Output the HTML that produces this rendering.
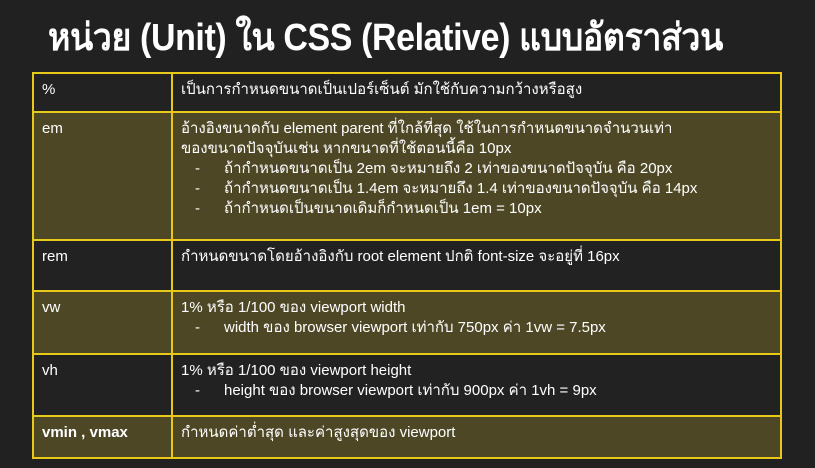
<!DOCTYPE html>
<html><head><meta charset="utf-8"><style>
body{margin:0;width:815px;height:468px;background:#212121;overflow:hidden;font-family:"Liberation Sans","DejaVu Sans",sans-serif;color:#fff}
h1{position:absolute;left:48px;top:8px;margin:0;font-size:35px;font-weight:bold;letter-spacing:-0.4px;white-space:nowrap;transform:scale(0.97,1.08);transform-origin:top left}
table{position:absolute;left:32px;top:72px;width:750px;border-collapse:collapse;font-size:15px}
td{border:2px solid #e8c918;vertical-align:top;padding:6px 8px 0 8px;line-height:20px;white-space:nowrap;overflow:hidden}
td:first-child{width:121px}
.o{background:#4d4726}
.d{background:#222}
.b{position:relative;padding-left:43px}
.b:before{content:"-";position:absolute;left:14px}
</style></head><body>
<h1>หน่วย (Unit) ใน CSS (Relative) แบบอัตราส่วน</h1>
<table>
<tr class="d" style="height:39px"><td>%</td><td>เป็นการกำหนดขนาดเป็นเปอร์เซ็นต์ มักใช้กับความกว้างหรือสูง</td></tr>
<tr class="o" style="height:128px"><td>em</td><td>อ้างอิงขนาดกับ element parent ที่ใกล้ที่สุด ใช้ในการกำหนดขนาดจำนวนเท่า<br>ของขนาดปัจจุบันเช่น หากขนาดที่ใช้ตอนนี้คือ 10px
<div class="b">ถ้ากำหนดขนาดเป็น 2em จะหมายถึง 2 เท่าของขนาดปัจจุบัน คือ 20px</div>
<div class="b">ถ้ากำหนดขนาดเป็น 1.4em จะหมายถึง 1.4 เท่าของขนาดปัจจุบัน คือ 14px</div>
<div class="b">ถ้ากำหนดเป็นขนาดเดิมก็กำหนดเป็น 1em = 10px</div></td></tr>
<tr class="d" style="height:51px"><td>rem</td><td>กำหนดขนาดโดยอ้างอิงกับ root element ปกติ font-size จะอยู่ที่ 16px</td></tr>
<tr class="o" style="height:63px"><td>vw</td><td>1% หรือ 1/100 ของ viewport width<div class="b">width ของ browser viewport เท่ากับ 750px ค่า 1vw = 7.5px</div></td></tr>
<tr class="d" style="height:62px"><td>vh</td><td>1% หรือ 1/100 ของ viewport height<div class="b">height ของ browser viewport เท่ากับ 900px ค่า 1vh = 9px</div></td></tr>
<tr class="o" style="height:42px"><td><b>vmin , vmax</b></td><td>กำหนดค่าต่ำสุด และค่าสูงสุดของ viewport</td></tr>
</table>
</body></html>
